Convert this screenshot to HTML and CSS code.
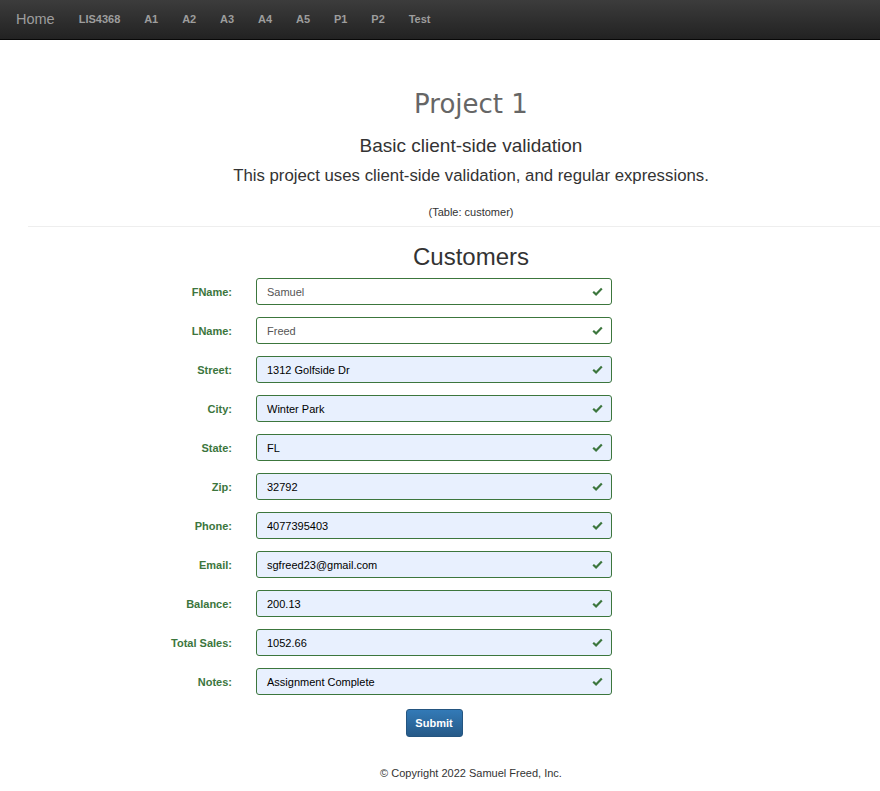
FILE: index.html
```html
<!DOCTYPE html>
<html>
<head>
<meta charset="utf-8">
<link rel="stylesheet" href="styles.css">
</head>
<body>
<nav class="navbar">
  <a class="brand" href="#">Home</a>
  <ul class="nav">
    <li><a href="#">LIS4368</a></li>
    <li><a href="#">A1</a></li>
    <li><a href="#">A2</a></li>
    <li><a href="#">A3</a></li>
    <li><a href="#">A4</a></li>
    <li><a href="#">A5</a></li>
    <li><a href="#">P1</a></li>
    <li><a href="#">P2</a></li>
    <li><a href="#">Test</a></li>
  </ul>
</nav>
<main class="page">
  <header class="intro">
    <h1 class="title">Project 1</h1>
    <p class="lead">Basic client-side validation</p>
    <p class="sub">This project uses client-side validation, and regular expressions.</p>
    <p class="table-note">(Table: customer)</p>
  </header>
  <hr class="rule">
  <h2 class="section-title">Customers</h2>
  <form class="form">
    <div class="row"><label class="lbl">FName:</label><div class="field plain"><span class="val">Samuel</span><svg class="check" viewBox="0 0 12 10"><path d="M1.2 5.2 L4.4 8.2 L10.8 1.6" /></svg></div></div>
    <div class="row"><label class="lbl">LName:</label><div class="field plain"><span class="val">Freed</span><svg class="check" viewBox="0 0 12 10"><path d="M1.2 5.2 L4.4 8.2 L10.8 1.6" /></svg></div></div>
    <div class="row"><label class="lbl">Street:</label><div class="field auto"><span class="val">1312 Golfside Dr</span><svg class="check" viewBox="0 0 12 10"><path d="M1.2 5.2 L4.4 8.2 L10.8 1.6" /></svg></div></div>
    <div class="row"><label class="lbl">City:</label><div class="field auto"><span class="val">Winter Park</span><svg class="check" viewBox="0 0 12 10"><path d="M1.2 5.2 L4.4 8.2 L10.8 1.6" /></svg></div></div>
    <div class="row"><label class="lbl">State:</label><div class="field auto"><span class="val">FL</span><svg class="check" viewBox="0 0 12 10"><path d="M1.2 5.2 L4.4 8.2 L10.8 1.6" /></svg></div></div>
    <div class="row"><label class="lbl">Zip:</label><div class="field auto"><span class="val">32792</span><svg class="check" viewBox="0 0 12 10"><path d="M1.2 5.2 L4.4 8.2 L10.8 1.6" /></svg></div></div>
    <div class="row"><label class="lbl">Phone:</label><div class="field auto"><span class="val">4077395403</span><svg class="check" viewBox="0 0 12 10"><path d="M1.2 5.2 L4.4 8.2 L10.8 1.6" /></svg></div></div>
    <div class="row"><label class="lbl">Email:</label><div class="field auto"><span class="val">sgfreed23@gmail.com</span><svg class="check" viewBox="0 0 12 10"><path d="M1.2 5.2 L4.4 8.2 L10.8 1.6" /></svg></div></div>
    <div class="row"><label class="lbl">Balance:</label><div class="field auto"><span class="val">200.13</span><svg class="check" viewBox="0 0 12 10"><path d="M1.2 5.2 L4.4 8.2 L10.8 1.6" /></svg></div></div>
    <div class="row"><label class="lbl">Total Sales:</label><div class="field auto"><span class="val">1052.66</span><svg class="check" viewBox="0 0 12 10"><path d="M1.2 5.2 L4.4 8.2 L10.8 1.6" /></svg></div></div>
    <div class="row"><label class="lbl">Notes:</label><div class="field auto"><span class="val">Assignment Complete</span><svg class="check" viewBox="0 0 12 10"><path d="M1.2 5.2 L4.4 8.2 L10.8 1.6" /></svg></div></div>
    <div class="actions"><button type="button" class="btn">Submit</button></div>
  </form>
  <footer class="footer">© Copyright 2022 Samuel Freed, Inc.</footer>
</main>
</body>
</html>
```
FILE: styles.css
```css
html, body {
  margin: 0;
  padding: 0;
  overflow-x: hidden;
  background: #fff;
  font-family: "Liberation Sans", Arial, sans-serif;
  color: #333;
}
.navbar {
  height: 39px;
  border-bottom: 1px solid #080808;
  background: linear-gradient(to bottom, #3c3c3c 0%, #222 100%);
  display: flex;
  align-items: center;
}
.brand {
  font-size: 14.5px;
  color: #9d9d9d;
  text-decoration: none;
  padding: 0 12px 0 16px;
  line-height: 39px;
}
.nav {
  list-style: none;
  margin: 0;
  padding: 0;
  display: flex;
}
.nav a {
  display: block;
  padding: 0 11.9px 0 12px;
  font-size: 11px;
  font-weight: bold;
  color: #9d9d9d;
  text-decoration: none;
  line-height: 39px;
}
.page {
  margin-left: 28px;
  width: 886px;
}
.intro {
  text-align: center;
}
.title {
  margin: 49px 0 0;
  font-family: "DejaVu Sans", sans-serif;
  font-weight: normal;
  font-size: 26px;
  line-height: 30px;
  color: #666;
}
.lead {
  margin: 17px 0 0;
  font-size: 19px;
  line-height: 20px;
  color: #333;
}
.sub {
  margin: 10px 0 0;
  font-size: 16.8px;
  line-height: 20px;
  color: #333;
}
.table-note {
  margin: 19px 0 0;
  font-size: 11px;
  line-height: 14px;
}
.rule {
  margin: 7px 0 0;
  border: 0;
  border-top: 1px solid #eee;
}
.section-title {
  margin: 17px 0 0;
  text-align: center;
  font-weight: normal;
  font-size: 24px;
  line-height: 26px;
  color: #333;
}
.form {
  margin-top: 8px;
  display: flex;
  flex-direction: column;
  gap: 12px;
}
.row {
  display: grid;
  grid-template-columns: 204px 356px;
  column-gap: 24px;
  align-items: center;
}
.lbl {
  text-align: right;
  font-size: 11px;
  font-weight: bold;
  color: #3c763d;
}
.field {
  box-sizing: border-box;
  height: 27px;
  border: 1px solid #3c763d;
  border-radius: 3px;
  display: flex;
  align-items: center;
  justify-content: space-between;
  padding: 0 8px 0 10px;
  font-size: 11px;
}
.field.plain {
  background: #fff;
  color: #555;
}
.field.auto {
  background: #e8f0fe;
  color: #000;
}
.check {
  width: 11px;
  height: 9px;
  fill: none;
  stroke: #3c763d;
  stroke-width: 2.4;
}
.actions {
  display: grid;
  grid-template-columns: 204px 356px;
  column-gap: 24px;
  margin-top: 2px;
}
.btn {
  grid-column: 2;
  justify-self: center;
  width: 57px;
  height: 28px;
  border: 1px solid #245580;
  border-radius: 3px;
  background: linear-gradient(to bottom, #337ab7 0%, #265a88 100%);
  color: #fff;
  font-family: "Liberation Sans", Arial, sans-serif;
  font-size: 11px;
  font-weight: bold;
  padding: 0;
}
.footer {
  margin-top: 30px;
  text-align: center;
  font-size: 11px;
  color: #333;
}
```
